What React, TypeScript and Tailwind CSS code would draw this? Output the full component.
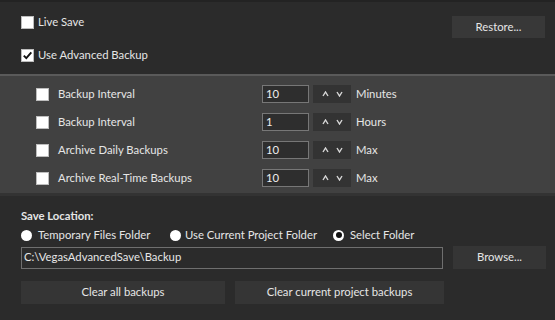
import React from "react";

function Check({ checked = false, size = 13 }: { checked?: boolean; size?: number }) {
  return (
    <span
      className="inline-flex items-center justify-center bg-white border border-[#bdbdbd] shrink-0"
      style={{ width: size, height: size }}
    >
      {checked && (
        <svg width="11" height="11" viewBox="0 0 11 11">
          <path d="M1.8 5.6 L4.3 8.2 L9.3 2.4" fill="none" stroke="#111" strokeWidth="1.9" />
        </svg>
      )}
    </span>
  );
}

function Radio({ selected = false }: { selected?: boolean }) {
  return (
    <span className="inline-flex items-center justify-center w-[11px] h-[11px] rounded-full bg-white shrink-0">
      {selected && <span className="w-[6px] h-[6px] rounded-full bg-[#111]" />}
    </span>
  );
}

function Spinner() {
  return (
    <div className="w-[38px] h-[18px] bg-[#333333] flex items-center justify-around px-[5px]">
      <svg width="7" height="6" viewBox="0 0 7 6">
        <path d="M1 5 L3.5 1 L6 5" fill="none" stroke="#d8d8d8" strokeWidth="1.4" />
      </svg>
      <svg width="7" height="6" viewBox="0 0 7 6">
        <path d="M1 1 L3.5 5 L6 1" fill="none" stroke="#d8d8d8" strokeWidth="1.4" />
      </svg>
    </div>
  );
}

function Row({ label, value, unit }: { label: string; value: string; unit: string }) {
  return (
    <div className="h-[28px] flex items-center">
      <div className="w-[226px] flex items-center">
        <Check size={13} />
        <span className="ml-[9px]">{label}</span>
      </div>
      <div className="w-[47px] h-[18px] border border-[#777] bg-[#2e2e2e] flex items-center pl-[3px] text-[#eee]">
        {value}
      </div>
      <div className="ml-[4px]">
        <Spinner />
      </div>
      <span className="ml-[5px]">{unit}</span>
    </div>
  );
}

export default function App() {
  return (
    <div
      className="w-[555px] h-[320px] bg-[#2b2b2b] text-[#e6e6e6] text-[11.3px] flex flex-col overflow-hidden"
      style={{ fontFamily: "Lato, 'Open Sans', sans-serif" }}
    >
      <div className="h-[74px] border-t-2 border-[#232323] flex justify-between pl-[21px] pr-[10px]">
        <div className="flex flex-col pt-[14px] gap-[20px]">
          <div className="flex items-center h-[13px]">
            <Check size={13} />
            <span className="ml-[4px]">Live Save</span>
          </div>
          <div className="flex items-center h-[13px]">
            <Check size={13} checked />
            <span className="ml-[4px]">Use Advanced Backup</span>
          </div>
        </div>
        <div className="pt-[14px]">
          <button className="w-[93px] h-[22px] bg-[#383838] text-[#e6e6e6]">Restore...</button>
        </div>
      </div>
      <div className="h-[2px] bg-[#5a5a5a]" />
      <div className="h-[117px] bg-[#414141] pl-[36px] pt-[4px]">
        <Row label="Backup Interval" value="10" unit="Minutes" />
        <Row label="Backup Interval" value="1" unit="Hours" />
        <Row label="Archive Daily Backups" value="10" unit="Max" />
        <Row label="Archive Real-Time Backups" value="10" unit="Max" />
      </div>
      <div className="h-[3px] bg-[#333]" />
      <div className="flex-1 pl-[21px] pr-[9px] pt-[12px]">
        <div className="font-bold h-[16px] flex items-center">Save Location:</div>
        <div className="flex items-center h-[20px] mt-[1px]">
          <div className="flex items-center w-[149px]">
            <Radio />
            <span className="ml-[6px]">Temporary Files Folder</span>
          </div>
          <div className="flex items-center w-[163px]">
            <Radio />
            <span className="ml-[4px]">Use Current Project Folder</span>
          </div>
          <div className="flex items-center">
            <Radio selected />
            <span className="ml-[6px]">Select Folder</span>
          </div>
        </div>
        <div className="flex items-center mt-[1px] gap-[10px]">
          <div className="w-[422px] h-[22px] border border-[#6f6f6f] bg-[#2b2b2b] flex items-center pl-[2px]">
            C:\VegasAdvancedSave\Backup
          </div>
          <button className="w-[93px] h-[23px] bg-[#353535] text-[#e6e6e6]">Browse...</button>
        </div>
        <div className="flex items-center mt-[12px] gap-[10px]">
          <button className="w-[204px] h-[23px] bg-[#353535] text-[#e6e6e6]">Clear all backups</button>
          <button className="w-[209px] h-[23px] bg-[#353535] text-[#e6e6e6]">Clear current project backups</button>
        </div>
      </div>
    </div>
  );
}
